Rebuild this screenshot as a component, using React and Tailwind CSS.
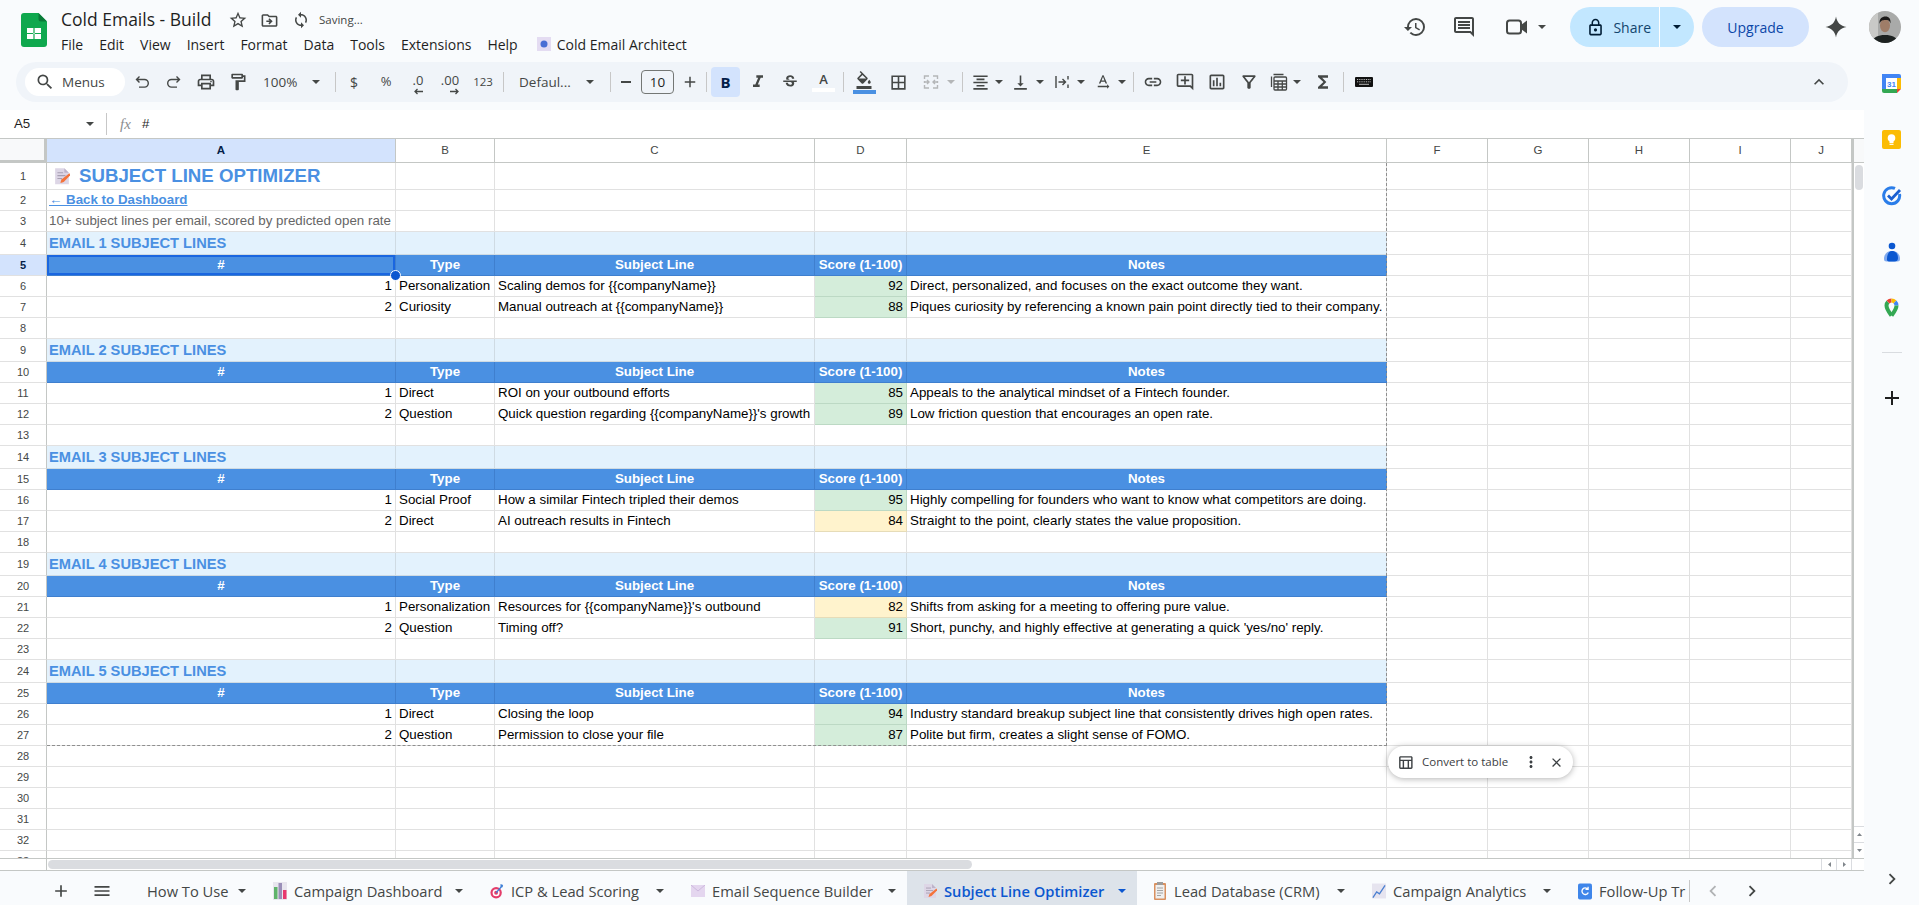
import React from "react";
import {
  MdOutlinePrint, MdOutlineFormatPaint, MdSearch, MdStarBorder, MdOutlineDriveFileMove,
  MdOutlineFormatColorFill, MdBorderAll, MdFormatAlignCenter, MdVerticalAlignBottom, MdTextRotationNone,
  MdLink, MdOutlineAddComment, MdOutlineInsertChart, MdOutlineFilterAlt, MdFunctions, MdExpandLess,
  MdHistory, MdOutlineComment, MdLockOutline, MdAdd, MdMenu, MdMoreVert, MdClose,
  MdChevronRight, MdChevronLeft, MdOutlineTableChart, MdFormatItalic, MdStrikethroughS, MdSync,
} from "react-icons/md";

const UI = "[font-family:'Open_Sans','Noto_Sans',sans-serif]";
const ARIAL = "[font-family:'Liberation_Sans',Arial,sans-serif]";
const GRID = "border-[#e1e1e1]";

const Caret = ({ className = "fill-[#444746]" }) => (
  <svg width="8" height="4" viewBox="0 0 8 4" className={className}><path d="M0 0h8L4 4z" /></svg>
);
const Sep = ({ className }) => <div className={"w-px h-[20px] bg-[#c7c7c7] shrink-0 " + className} />;
const Btn = ({ className = "w-8", children }) => (
  <div className={"h-7 flex items-center justify-center text-[#444746] shrink-0 " + className}>{children}</div>
);
const Car = ({ className = "w-2" }) => (
  <div className={"flex items-center justify-center shrink-0 " + className}><Caret /></div>
);

const UndoIcon = ({ className = "" }) => (
  <svg width="18" height="18" viewBox="0 0 18 18" fill="none" stroke="#444746" strokeWidth="1.4" className={className}>
    <path d="M4 6.500h7.500a3.800 3.800 0 0 1 0 7.600H6M6.500 3.500l-3 3 3 3" />
  </svg>
);
const MeetIcon = () => (
  <svg width="26" height="24" viewBox="0 0 26 24">
    <rect x="3" y="5.500" width="14" height="13" rx="2.500" fill="none" stroke="#444746" strokeWidth="2" />
    <path d="M17 10l6-4.500v13L17 14z" fill="#444746" />
  </svg>
);

const SheetsLogo = () => (
  <svg width="26" height="34" viewBox="0 0 26 34">
    <path d="M3 0h14.5L26 8.5V31a3 3 0 0 1-3 3H3a3 3 0 0 1-3-3V3a3 3 0 0 1 3-3z" fill="#0fa84e" />
    <path d="M17.5 0L26 8.5h-6a2.5 2.5 0 0 1-2.5-2.5z" fill="#0a7a38" />
    <path d="M6 15h14v11H6z" fill="#fff" />
    <path d="M12.4 15v11h1.2V15zM6 19.9h14v1.2H6z" fill="#0fa84e" />
  </svg>
);

const Avatar = () => (
  <svg width="32" height="32" viewBox="0 0 32 32" className="rounded-full">
    <rect width="32" height="32" fill="#a9aaa9" />
    <rect x="0" y="0" width="9" height="32" fill="#c9c9c7" />
    <path d="M3 32c1-6 6-8 13-8s12 2 13 8z" fill="#1d2221" />
    <ellipse cx="16" cy="14.500" rx="5" ry="6.800" fill="#9f7d68" />
    <path d="M10.500 13c-.5-5.500 2.500-7.500 6-7.500s5.500 2.500 5 7c-1-3-2-3.500-5-3.500s-5 .5-6 4z" fill="#1c1a19" />
  </svg>
);

const Spark = () => (
  <svg width="24" height="24" viewBox="0 0 24 24"><path d="M12 1.5c1 6 4.500 9.500 10.500 10.500C16.500 13 13 16.500 12 22.500 11 16.500 7.500 13 1.500 12 7.500 11 11 7.500 12 1.500z" fill="#444746" /></svg>
);

const WrapIcon = () => (
  <svg width="18" height="18" viewBox="0 0 18 18" fill="none" stroke="#444746" strokeWidth="1.4">
    <path d="M3 3v12M5.500 9H12M9.500 6l3 3-3 3M15 3v3.500M15 11.500V15" />
  </svg>
);
const MergeIcon = () => (
  <svg width="18" height="18" viewBox="0 0 18 18" fill="none" stroke="#b4b6b8" strokeWidth="1.4">
    <path d="M7 3H2.500v3M2.500 8v2M2.500 12v3H7M11 3h4.500v3M15.500 8v2M15.500 12v3H11M2 9h4.500M5 7l2 2-2 2M16 9h-4.500M13 7l-2 2 2 2" />
  </svg>
);
const CalcIcon = () => (
  <svg width="18" height="18" viewBox="0 0 18 18" fill="none" stroke="#444746" strokeWidth="1.3">
    <path d="M1.500 3.500V14M3.500 1.500h10" />
    <rect x="4" y="4" width="12.500" height="13" rx="1" />
    <path d="M4 8h12.500M4 11h12.500M4 14h12.500M8 8v9M12.300 8v9" />
  </svg>
);
const KeyboardIcon = () => (
  <svg width="18" height="10" viewBox="0 0 18 10">
    <rect width="18" height="10" rx="1" fill="#111" />
    <path d="M2 2.500h14M2 4.800h14" stroke="#ccc" strokeWidth=".9" strokeDasharray="1 .8" />
    <path d="M4 7.300h10" stroke="#ccc" strokeWidth=".9" />
  </svg>
);
const Dec = ({ label, dir }) => (
  <div className={"relative text-[#444746] text-[13px] font-medium leading-none " + UI}>
    <span className="block -mt-[4px]">{label}</span>
    <svg width="10" height="7" viewBox="0 0 10 7" className={"absolute -bottom-[8px] " + (dir === "l" ? "right-[0px]" : "right-[-1px]")} fill="none" stroke="#444746" strokeWidth="1.300">
      {dir === "l" ? <path d="M10 3.500H2M4.500 1L2 3.500 4.500 6" /> : <path d="M0 3.500h8M5.500 1L8 3.500 5.500 6" />}
    </svg>
  </div>
);

const Memo = ({ s = 14 }) => (
  <svg width={s} height={s * 1.15} viewBox="0 0 14 16">
    <path d="M1 1h8l4 4v10H1z" fill="#ddd6e6" />
    <path d="M9 1l4 4H9z" fill="#bdb3ca" />
    <path d="M3 5h5M3 7.500h7M3 10h4" stroke="#a79fb2" strokeWidth=".9" />
    <path d="M13.500 5.500l1 1.500-6 6-3 1 1-3z" fill="#f4733a" />
  </svg>
);
const BarsIcon = () => (
  <svg width="14" height="18" viewBox="0 0 14 18">
    <rect x="0" width="14" height="18" fill="#e8e6ee" />
    <rect x="1" y="5" width="3.500" height="12" fill="#5fb36b" />
    <rect x="5.500" y="1" width="3.500" height="16" fill="#9a8fb8" />
    <rect x="10" y="8" width="3.500" height="9" fill="#e8386f" />
  </svg>
);
const TargetIcon = () => (
  <svg width="16" height="18" viewBox="0 0 16 18">
    <circle cx="7" cy="11" r="6.500" fill="#e43d6a" />
    <circle cx="7" cy="11" r="4" fill="#fff" />
    <circle cx="7" cy="11" r="2.200" fill="#e43d6a" />
    <path d="M7 11l7-8" stroke="#3f7fd6" strokeWidth="1.500" />
    <path d="M12 1l3 1-1 3-2-1z" fill="#3f7fd6" />
  </svg>
);
const MailIcon = () => (
  <svg width="14" height="12" viewBox="0 0 14 12">
    <rect width="14" height="12" fill="#e4d6ef" />
    <path d="M0 0l7 6 7-6" fill="none" stroke="#cdb9dd" strokeWidth="1" />
  </svg>
);
const ClipIcon = () => (
  <svg width="12" height="18" viewBox="0 0 12 18">
    <rect y="1" width="12" height="17" rx="1" fill="#d9905f" />
    <rect x="1.500" y="3" width="9" height="13.500" fill="#efefef" />
    <rect x="3" y="0" width="6" height="3" fill="#9c9c9c" />
    <path d="M3 6h6M3 8.500h6M3 11h6M3 13.500h4" stroke="#9a9a9a" strokeWidth=".9" />
  </svg>
);
const LineIcon = () => (
  <svg width="15" height="16" viewBox="0 0 15 16">
    <rect width="15" height="16" fill="#e6e4ef" />
    <path d="M1 15l4-6 3 2 6-9" fill="none" stroke="#4a7fd0" strokeWidth="1.400" />
  </svg>
);
const RefreshIcon = () => (
  <svg width="15" height="17" viewBox="0 0 15 17">
    <rect width="15" height="17" rx="2" fill="#3f86ea" />
    <path d="M10.500 6A3.500 3.500 0 1 0 11 9.500M10.800 3.500V6.300H8" fill="none" stroke="#fff" strokeWidth="1.400" />
  </svg>
);

const CalendarIcon = () => (
  <svg width="19" height="19" viewBox="0 0 19 19">
    <path d="M2 0h15a2 2 0 0 1 2 2v2H0V2a2 2 0 0 1 2-2z" fill="#4285f4" />
    <rect y="0" width="4" height="15" fill="#4285f4" />
    <rect x="15" y="4" width="4" height="11" fill="#fbbc04" />
    <path d="M0 15h15v4H2a2 2 0 0 1-2-2z" fill="#34a853" />
    <path d="M15 15h4l-4 4z" fill="#ea4335" />
    <rect x="4" y="4" width="11" height="11" fill="#fff" />
    <text x="9.500" y="13" fontSize="8" fontWeight="700" textAnchor="middle" fill="#4285f4" fontFamily="Liberation Sans">31</text>
  </svg>
);
const KeepIcon = () => (
  <svg width="19" height="19" viewBox="0 0 19 19">
    <rect width="19" height="19" rx="2" fill="#fbbc04" />
    <circle cx="9.500" cy="8" r="3.800" fill="#fff" />
    <rect x="7.500" y="11" width="4" height="2" fill="#fff" />
    <rect x="7.500" y="13.700" width="4" height="1.200" fill="#fff" />
  </svg>
);
const TasksIcon = () => (
  <svg width="20" height="20" viewBox="0 0 20 20" fill="none">
    <path d="M17.500 8a8 8 0 1 1-4.500-5.600" stroke="#2b7de9" strokeWidth="3" />
    <path d="M6 9.500l3.500 3.500L18 4" stroke="#1a5fd0" strokeWidth="2.800" />
  </svg>
);
const ContactsIcon = () => (
  <svg width="16" height="20" viewBox="0 0 16 20">
    <circle cx="8" cy="4" r="3.300" fill="#0b57d0" />
    <path d="M0 17c0-5 3-8 8-8s8 3 8 8a2.500 2.500 0 0 1-2.500 2.500H2.500A2.500 2.500 0 0 1 0 17z" fill="#7fa9ef" />
    <path d="M3 17c0-5 2-8 5-8s6 2 6 7a3.500 3.500 0 0 1-3.500 3.500H5A2 2 0 0 1 3 17z" fill="#0b57d0" />
  </svg>
);
const MapsIcon = () => (
  <svg width="15" height="20" viewBox="0 0 15 20" fill="none">
    <path d="M7.500 17.500C4.500 13.500 2.500 11 2.500 7.500a5 5 0 0 1 1.500-3.500" stroke="#34a853" strokeWidth="4" />
    <path d="M4 4A5 5 0 0 1 7.500 2.500" stroke="#ea4335" strokeWidth="4" />
    <path d="M7.500 2.500a5 5 0 0 1 3.500 1.500" stroke="#fbbc04" strokeWidth="4" />
    <path d="M11 4a5 5 0 0 1 1.500 3.500" stroke="#4285f4" strokeWidth="4" />
    <path d="M12.500 7.500c0 3.500-2 6-5 10" stroke="#34a853" strokeWidth="4" />
  </svg>
);

const MENUS = ["File", "Edit", "View", "Insert", "Format", "Data", "Tools", "Extensions", "Help"];

function Header() {
  return (
    <div className={"flex h-[62px] shrink-0 " + UI}>
      <div className="ml-[21px] mt-[13px] shrink-0"><SheetsLogo /></div>
      <div className="ml-[14px] flex flex-col">
        <div className="flex items-center mt-[7px] h-[26px]">
          <div className="text-[17.500px] leading-none text-[#1f1f1f] w-[166px] whitespace-nowrap">Cold Emails - Build</div>
          <MdStarBorder size={20} className="text-[#444746] ml-[1px]" />
          <MdOutlineDriveFileMove size={19} className="text-[#444746] ml-[12px]" />
          <MdSync size={18} className="text-[#444746] ml-[13px]" />
          <div className="text-[11.500px] text-[#444746] ml-[9px]">Saving...</div>
        </div>
        <div className="flex items-center h-[20px] mt-[1px] gap-[16px] text-[14px] text-[#1f1f1f]">
          {MENUS.map((m) => <span key={m}>{m}</span>)}
          <span className="flex items-center ml-[3px]">
            <svg width="14" height="14" viewBox="0 0 14 14" className="mr-[6px]"><rect width="14" height="14" fill="#e4dcf2" /><circle cx="7" cy="7" r="3.500" fill="#4a6fd4" /></svg>
            Cold Email Architect
          </span>
        </div>
      </div>
      <div className="ml-auto flex items-center h-[54px] text-[#444746]">
        <MdHistory size={24} />
        <MdOutlineComment size={24} className="ml-[25px]" />
        <span className="ml-[28px]"><MeetIcon /></span>
        <div className="ml-[8px]"><Caret /></div>
        <div className="ml-[24px] flex h-10 w-[124px] rounded-full bg-[#c2e7ff] text-[#001d35]">
          <div className="w-[90px] flex items-center justify-end border-r border-white pr-[8px]">
            <MdLockOutline size={19} className="mr-[8px]" />
            <span className="text-[14px] font-medium text-[#12456e]">Share</span>
          </div>
          <div className="flex-1 flex items-center justify-center"><Caret className="fill-[#001d35]" /></div>
        </div>
        <div className="ml-[8px] flex h-10 w-[107px] items-center justify-center rounded-full bg-[#d3e3fd] text-[14px] font-medium text-[#0b47a8]">Upgrade</div>
        <div className="ml-[15px]"><Spark /></div>
        <div className="ml-[21px] mr-[18px]"><Avatar /></div>
      </div>
    </div>
  );
}

function Toolbar() {
  return (
    <div className={"ml-[16px] w-[1832px] h-10 shrink-0 rounded-full bg-[#f0f4f9] flex items-center pl-[9px] " + UI}>
      <div className="w-[100px] h-7 rounded-full bg-white flex items-center pl-[10px] text-[#444746] text-[13.500px] shrink-0">
        <MdSearch size={20} /><span className="ml-[7px]">Menus</span>
      </div>
      <Btn className="w-8 ml-[1px]"><UndoIcon /></Btn>
      <Btn className="w-8"><UndoIcon className="-scale-x-100" /></Btn>
      <Btn className="w-8"><MdOutlinePrint size={20} /></Btn>
      <Btn className="w-8"><MdOutlineFormatPaint size={20} /></Btn>
      <div className="w-[73px] flex items-center justify-between pl-[9px] pr-[7px] text-[13.500px] text-[#444746] shrink-0"><span>100%</span><Caret /></div>
      <Sep className="ml-[8px] mr-[2px]" />
      <Btn className="w-8 text-[14px] font-medium">$</Btn>
      <Btn className="w-8 text-[13px] font-medium">%</Btn>
      <Btn className="w-8"><Dec label=".0" dir="l" /></Btn>
      <Btn className="w-8"><Dec label=".00" dir="r" /></Btn>
      <Btn className="w-[34px] text-[11.500px] font-medium">123</Btn>
      <Sep className="ml-[3px]" />
      <div className="w-[96px] flex items-center justify-between pl-[15px] pr-[6px] text-[13.500px] text-[#444746] shrink-0"><span>Defaul...</span><Caret /></div>
      <Sep className="ml-[10px]" />
      <Btn className="w-[30px] text-[18px]"><span className="w-[10px] h-[1.500px] bg-[#444746]" /></Btn>
      <div className="w-[33px] h-6 border border-[#747775] rounded-[4px] flex items-center justify-center text-[13.500px] text-[#1f1f1f] shrink-0">10</div>
      <Btn className="w-8"><MdAdd size={18} /></Btn>
      <Sep />
      <div className="ml-[4px] w-[29px] h-[30px] rounded-[4px] bg-[#d3e3fd] flex items-center justify-center text-[15px] font-bold text-[#041e49] shrink-0">B</div>
      <Btn className="w-8 ml-[2px]"><MdFormatItalic size={20} /></Btn>
      <Btn className="w-[31px]"><MdStrikethroughS size={18} /></Btn>
      <div className="w-[31px] ml-[3px] flex flex-col items-center shrink-0">
        <span className="text-[13px] leading-[15px] font-semibold text-[#444746]">A</span>
        <span className="w-[23px] h-[4px] bg-white mt-[1px]" />
      </div>
      <Sep className="ml-[4px]" />
      <div className="w-8 ml-[4px] flex flex-col items-center shrink-0">
        <MdOutlineFormatColorFill size={18} className="text-[#444746]" />
        <span className="w-[23px] h-[4px] bg-[#4a90e2] mt-[1px]" />
      </div>
      <Btn className="w-8 ml-[2px]"><MdBorderAll size={19} /></Btn>
      <Btn className="w-8 ml-[1px]"><MergeIcon /></Btn>
      <Btn className="w-2"><svg width="8" height="4" viewBox="0 0 8 4" className="fill-[#b4b6b8]"><path d="M0 0h8L4 4z" /></svg></Btn>
      <Sep className="ml-[7px]" />
      <Btn className="w-[30px] ml-[2px]"><MdFormatAlignCenter size={19} /></Btn><Car />
      <Btn className="w-[31px] ml-[2px]"><MdVerticalAlignBottom size={19} /></Btn><Car />
      <Btn className="w-[30px] ml-[3px]"><WrapIcon /></Btn><Car />
      <Btn className="w-[30px] ml-[3px]"><MdTextRotationNone size={18} /></Btn><Car />
      <Sep className="ml-[7px]" />
      <Btn className="w-8 ml-[3px]"><MdLink size={20} /></Btn>
      <Btn className="w-8"><MdOutlineAddComment size={20} /></Btn>
      <Btn className="w-8"><MdOutlineInsertChart size={20} /></Btn>
      <Btn className="w-8"><MdOutlineFilterAlt size={20} /></Btn>
      <Btn className="w-7"><CalcIcon /></Btn><Car />
      <Btn className="w-8 ml-[6px]"><MdFunctions size={20} /></Btn>
      <Sep className="ml-[4px]" />
      <Btn className="w-8 ml-[4px]"><KeyboardIcon /></Btn>
      <Btn className="w-8 ml-auto mr-[13px]"><MdExpandLess size={20} /></Btn>
    </div>
  );
}

function FormulaBar() {
  return (
    <div className={"h-[28px] mt-[8px] shrink-0 bg-white flex items-center text-[13.300px] text-[#1f1f1f] " + ARIAL}>
      <span className="ml-[14px] w-[72px]">A5</span>
      <Caret />
      <span className="ml-[12px] w-px h-[22px] bg-[#c7c7c7]" />
      <span className="ml-[13px] w-[12px] italic text-[#8b8d8f] text-[15px] [font-family:'Liberation_Serif',serif]">fx</span>
      <span className="ml-[10px]">#</span>
    </div>
  );
}

const COLS = ["w-[349px]", "w-[99px]", "w-[320px]", "w-[92px]", "w-[480px]", "w-[101px]", "w-[101px]", "w-[101px]", "w-[101px]", "w-[61px]"];
const LET = ["A", "B", "C", "D", "E", "F", "G", "H", "I", "J"];

const SECTIONS = [
  ["EMAIL 1 SUBJECT LINES", [
    [1, "Personalization", "Scaling demos for {{companyName}}", 92, "Direct, personalized, and focuses on the exact outcome they want."],
    [2, "Curiosity", "Manual outreach at {{companyName}}", 88, "Piques curiosity by referencing a known pain point directly tied to their company."],
  ]],
  ["EMAIL 2 SUBJECT LINES", [
    [1, "Direct", "ROI on your outbound efforts", 85, "Appeals to the analytical mindset of a Fintech founder."],
    [2, "Question", "Quick question regarding {{companyName}}'s growth", 89, "Low friction question that encourages an open rate."],
  ]],
  ["EMAIL 3 SUBJECT LINES", [
    [1, "Social Proof", "How a similar Fintech tripled their demos", 95, "Highly compelling for founders who want to know what competitors are doing."],
    [2, "Direct", "AI outreach results in Fintech", 84, "Straight to the point, clearly states the value proposition."],
  ]],
  ["EMAIL 4 SUBJECT LINES", [
    [1, "Personalization", "Resources for {{companyName}}'s outbound", 82, "Shifts from asking for a meeting to offering pure value."],
    [2, "Question", "Timing off?", 91, "Short, punchy, and highly effective at generating a quick 'yes/no' reply."],
  ]],
  ["EMAIL 5 SUBJECT LINES", [
    [1, "Direct", "Closing the loop", 94, "Industry standard breakup subject line that consistently drives high open rates."],
    [2, "Question", "Permission to close your file", 87, "Polite but firm, creates a slight sense of FOMO."],
  ]],
];

const Cell = ({ i, className = "", line = GRID, children }) => (
  <div className={COLS[i] + " shrink-0 h-full box-border border-r border-b flex items-center whitespace-nowrap px-[3px] " + line + " " + className}>{children}</div>
);

const RowHead = ({ n, sel }) => (
  <div className={"w-[47px] shrink-0 h-full box-border border-r border-r-[#c4c7c5] border-b border-b-[#e1e1e1] flex items-center justify-center text-[11px] " + (sel ? "bg-[#d3e3fd] text-[#041e49] font-bold" : "bg-white text-[#444746]")}>{n}</div>
);

const Blank = ({ from = 0, line }) => LET.map((l, i) => (i >= from ? <Cell key={l} i={i} line={line} /> : null));

function buildRows() {
  const rows = [];
  let n = 0;
  const push = (h, body, sel) => { n += 1; const num = n; rows.push(<div key={num} className={"flex " + h}><RowHead n={num} sel={sel} />{body}</div>); };
  push("h-[27px]", <>
    <Cell i={0} className="pl-[7px]">
      <Memo s={16} />
      <span className="ml-[9px] text-[18.670px] font-bold text-[#4a90e2]">SUBJECT LINE OPTIMIZER</span>
    </Cell>
    <Blank from={1} />
  </>);
  push("h-[21px]", <>
    <Cell i={0} className="pl-[2px]"><span className="font-bold text-[#4a90e2] underline">← Back to Dashboard</span></Cell>
    <Blank from={1} />
  </>);
  push("h-[21px]", <>
    <Cell i={0} className="pl-[2px]"><span className="text-[#666666]">10+ subject lines per email, scored by predicted open rate</span></Cell>
    <Blank from={1} />
  </>);
  SECTIONS.forEach(([title, items], sIdx) => {
    push("h-[23px]", <>
      <Cell i={0} className="bg-[#e3f2fd] pl-[2px]" line="border-[#cfdbe3]"><span className="text-[14.670px] font-bold text-[#4a90e2]">{title}</span></Cell>
      {[1, 2, 3, 4].map((i) => <Cell key={i} i={i} className="bg-[#e3f2fd]" line="border-[#cfdbe3]" />)}
      <Blank from={5} />
    </>);
    const selected = sIdx === 0;
    push("h-[21px]", <>
      {["#", "Type", "Subject Line", "Score (1-100)", "Notes"].map((t, i) => (
        <Cell key={t} i={i} line="border-[#3f7fce]" className={"relative bg-[#4a90e2] justify-center text-white font-bold " + (selected && i === 0 ? "shadow-[inset_0_0_0_2px_#1a66e0]" : "")}>
          {t}
          {selected && i === 0 ? <span className="absolute -right-[6px] -bottom-[6px] z-20 w-[11px] h-[11px] rounded-full bg-[#0b57d0] border border-white" /> : null}
        </Cell>
      ))}
      <Blank from={5} />
    </>, selected);
    items.forEach(([k, type, subj, score, note]) => {
      const tone = score >= 85 ? "bg-[#d4edda] border-[#bcd9c4]" : "bg-[#fff3cd] border-[#e6dcb8]";
      push("h-[21px]", <>
        <Cell i={0} className="justify-end text-black">{k}</Cell>
        <Cell i={1} className="text-black">{type}</Cell>
        <Cell i={2} className="text-black">{subj}</Cell>
        <Cell i={3} line="" className={"justify-end text-black " + tone}>{score}</Cell>
        <Cell i={4} className="text-black">{note}</Cell>
        <Blank from={5} />
      </>);
    });
    if (sIdx < 4) push("h-[21px]", <Blank />);
  });
  for (let j = 0; j < 6; j++) push("h-[21px]", <Blank />);
  return rows;
}

function Grid() {
  return (
    <div className={"h-[720px] shrink-0 flex bg-white text-[13.330px] " + ARIAL}>
      <div className="w-[1852px] shrink-0 flex flex-col overflow-hidden">
        <div className="flex h-[25px] shrink-0 box-border border-t border-b border-[#c4c7c5] text-[11.500px]">
          <div className="w-[47px] shrink-0 bg-[#f8f9fa] box-border border-r-[3px] border-b-[2px] border-[#c4c7c5]" />
          {LET.map((l, i) => (
            <div key={l} className={COLS[i] + " shrink-0 box-border border-r border-[#c4c7c5] flex items-center justify-center " + (i === 0 ? "bg-[#d3e3fd] text-[#041e49] font-bold" : "text-[#444746]")}>{l}</div>
          ))}
        </div>
        <div className="relative h-[695px] overflow-hidden">
          {buildRows()}
          <div className="absolute left-[47px] top-0 w-[1340px] h-[583px] box-border border-r border-b border-dashed border-[#8f8f8f] pointer-events-none" />
          <div className={"absolute left-[1388px] top-[583px] w-[185px] h-[32px] rounded-full bg-white shadow-[0_1px_6px_rgba(0,0,0,0.3)] flex items-center pl-[9px] text-[#3c4043] z-10 " + UI}>
            <MdOutlineTableChart size={17} />
            <span className="ml-[8px] text-[11.500px] w-[96px] whitespace-nowrap">Convert to table</span>
            <MdMoreVert size={18} className="ml-[4px]" />
            <MdClose size={15} className="ml-[9px]" />
          </div>
        </div>
      </div>
      <div className="w-[12px] shrink-0 box-border border-l-2 border-[#c4c7c5] flex flex-col">
        <div className="h-[25px] shrink-0 bg-[#f8f9fa] border-t border-b border-[#c4c7c5]" />
        <div className="flex-1 relative">
          <div className="mx-[1px] mt-[2px] h-[25px] rounded-full bg-[#dadce0]" />
        </div>
        <div className="h-[16px] shrink-0 border-t border-[#dadce0] flex items-center justify-center">
          <svg width="5" height="3" viewBox="0 0 5 3" className="fill-[#80868b]"><path d="M0 3h5L2.500 0z" /></svg>
        </div>
        <div className="h-[16px] shrink-0 border-t border-[#dadce0] flex items-center justify-center">
          <svg width="5" height="3" viewBox="0 0 5 3" className="fill-[#80868b]"><path d="M0 0h5L2.500 3z" /></svg>
        </div>
      </div>
    </div>
  );
}

function HScroll() {
  return (
    <div className="h-[13px] shrink-0 box-border bg-white flex border-t border-b border-[#c4c7c5]">
      <div className="w-[47px] shrink-0 border-r border-[#c4c7c5]" />
      <div className="ml-[1px] w-[924px] h-[9px] rounded-full bg-[#dadce0] mt-[1px]" />
      <div className="ml-auto w-[31px] h-full flex border-l border-[#dadce0] mr-[12px] border-r">
        <div className="flex-1 flex items-center justify-center border-r border-[#dadce0]"><svg width="3" height="5" viewBox="0 0 3 5" className="fill-[#80868b]"><path d="M3 0v5L0 2.500z" /></svg></div>
        <div className="flex-1 flex items-center justify-center"><svg width="3" height="5" viewBox="0 0 3 5" className="fill-[#80868b]"><path d="M0 0v5l3-2.500z" /></svg></div>
      </div>
    </div>
  );
}

const Tab = ({ icon, w, active, children }) => (
  <div className={"h-full flex items-center shrink-0 pl-[16px] pr-[11px] " + (active ? "bg-[#dde3ea] text-[#0b57d0] font-semibold" : "text-[#444746] font-medium")}>
    {icon ? <span className="w-[14px] h-[18px] flex items-center justify-center mr-[7px] shrink-0">{icon}</span> : null}
    <span className={"whitespace-nowrap text-[14.700px] " + w}>{children}</span>
    <span className="ml-[12px] w-2 flex items-center"><Caret className={active ? "fill-[#0b57d0]" : "fill-[#444746]"} /></span>
  </div>
);

function Tabs() {
  return (
    <div className={"flex-1 flex items-stretch " + UI}>
      <div className="w-[131px] shrink-0 flex items-center text-[#444746]">
        <MdAdd size={20} className="ml-[51px]" />
        <MdMenu size={20} className="ml-[21px]" />
      </div>
      <Tab w="w-[79px]">How To Use</Tab>
      <Tab icon={<BarsIcon />} w="w-[149px]">Campaign Dashboard</Tab>
      <Tab icon={<TargetIcon />} w="w-[133px]">ICP &amp; Lead Scoring</Tab>
      <Tab icon={<MailIcon />} w="w-[164px]">Email Sequence Builder</Tab>
      <Tab icon={<Memo s={14} />} w="w-[162px]" active>Subject Line Optimizer</Tab>
      <Tab icon={<ClipIcon />} w="w-[151px]">Lead Database (CRM)</Tab>
      <Tab icon={<LineIcon />} w="w-[138px]">Campaign Analytics</Tab>
      <div className="w-[128px] shrink-0 flex items-center pl-[16px] border-r border-[#c7c7c7] my-[9px] overflow-hidden text-[#444746] font-medium">
        <span className="w-[14px] flex justify-center mr-[7px] shrink-0"><RefreshIcon /></span>
        <span className="text-[14.700px] whitespace-nowrap">Follow-Up Tr</span>
      </div>
      <MdChevronLeft size={22} className="self-center ml-[12px] text-[#b1b3b5]" />
      <MdChevronRight size={22} className="self-center ml-[17px] text-[#444746]" />
    </div>
  );
}

function Sidebar() {
  return (
    <div className="w-[55px] shrink-0 relative flex flex-col items-center">
      <div className="h-[12px] shrink-0" />
      <div className="h-[19px] flex items-center"><CalendarIcon /></div>
      <div className="h-[19px] mt-[37px] flex items-center"><KeepIcon /></div>
      <div className="h-[20px] mt-[37px] flex items-center"><TasksIcon /></div>
      <div className="h-[20px] mt-[36px] flex items-center"><ContactsIcon /></div>
      <div className="h-[20px] mt-[36px] flex items-center"><MapsIcon /></div>
      <div className="w-[20px] h-px bg-[#d9dce0] mt-[34px]" />
      <MdAdd size={24} className="mt-[33px] text-[#1f1f1f]" />
      <MdChevronRight size={22} className="mt-[458px] text-[#444746]" />
    </div>
  );
}

export default function App() {
  return (
    <div className="w-[1919px] h-[905px] overflow-hidden bg-[#f9fbfd] flex flex-col">
      <Header />
      <div className="flex flex-1 min-h-0">
        <div className="w-[1864px] shrink-0 flex flex-col">
          <Toolbar />
          <FormulaBar />
          <Grid />
          <HScroll />
          <Tabs />
        </div>
        <Sidebar />
      </div>
    </div>
  );
}
